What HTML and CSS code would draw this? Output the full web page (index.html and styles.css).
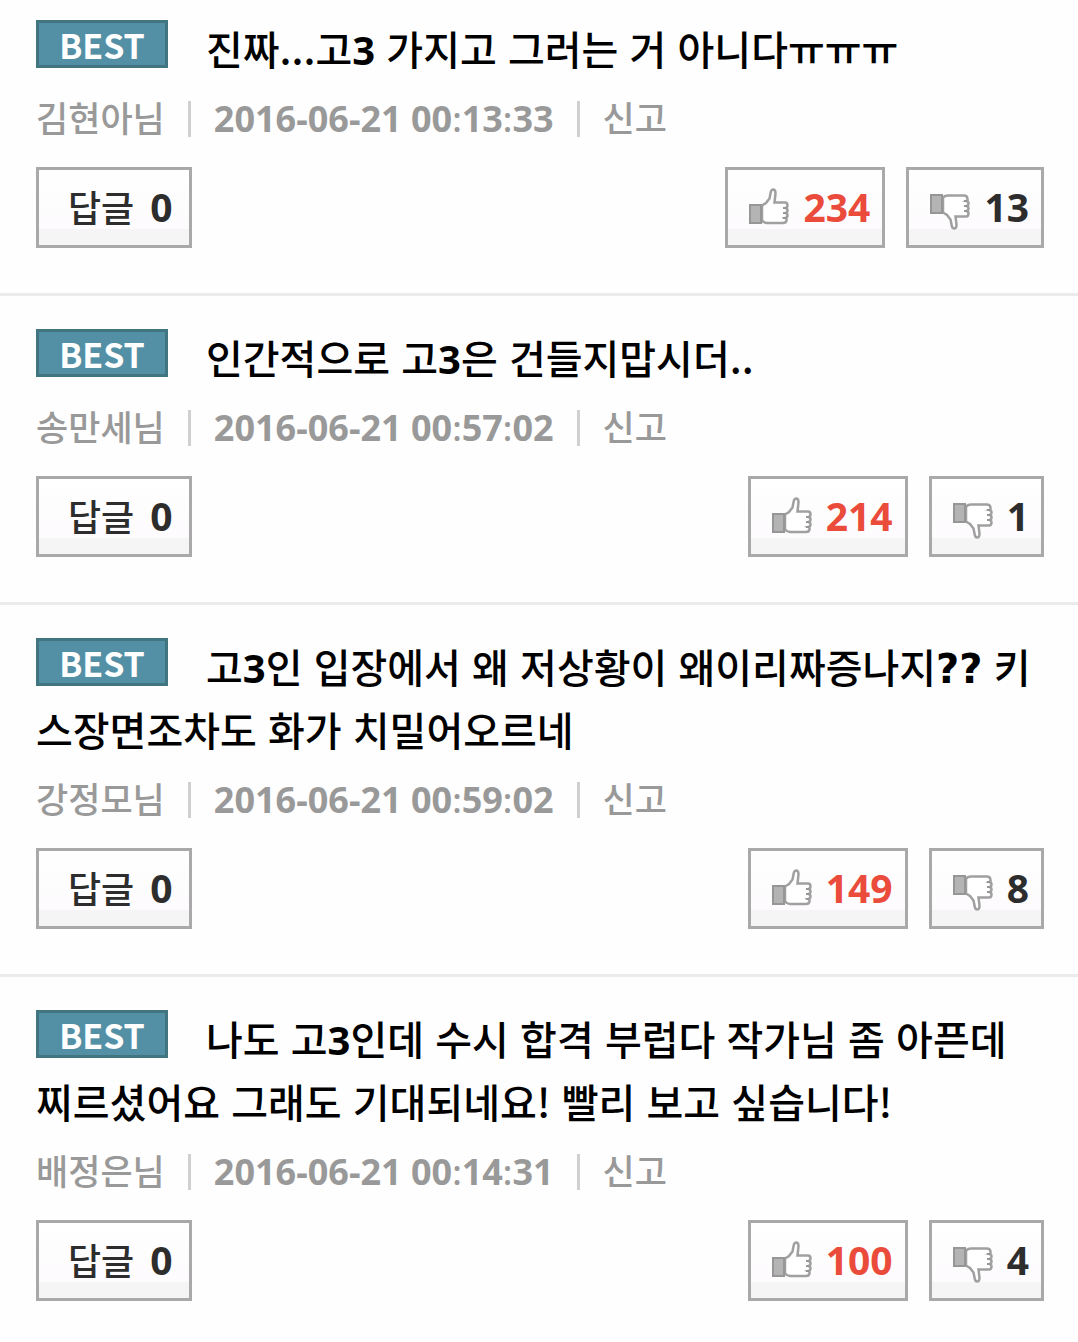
FILE: index.html
```html
<!DOCTYPE html>
<html lang="ko">
<head>
    <meta charset="UTF-8">
    <meta name="viewport" content="width=device-width, initial-scale=1.0">
    <title>베스트 댓글</title>
    <link rel="stylesheet" href="styles.css">
</head>
<body>

<!-- Shared icons -->
<svg class="sprite" aria-hidden="true">
    <symbol id="thumb-up" viewBox="0 0 40 44">
        <path d="M13 19.500L17 17L20.500 12.500L21.800 6Q22.300 3.500 24.500 3.500Q26.500 3.800 26.500 7.500L25.500 16.500H36Q38.500 16.500 38.500 19.500Q38.500 21.500 36.500 22Q38.500 22.500 38.500 24.500Q38.500 26.500 36.500 27Q38.500 27.500 38.500 29.500Q38.500 31.500 36.500 32Q38 32.500 37.500 34.500Q37 37 34 37H18Q15 37 13 34.500Z" fill="#fff" stroke="#a0a0a0" stroke-width="2.500"/>
        <path d="M34 22H37M34 27H37M34 32H37" stroke="#969696" stroke-width="2"/>
        <rect x="1" y="19" width="11" height="18" fill="#b4b4b4" stroke="#969696" stroke-width="2"/>
    </symbol>
    <symbol id="thumb-down" viewBox="0 0 40 44">
        <path d="M13 26.500L17 29L20.500 33.500L21.800 40Q22.300 42.500 24.500 42.500Q26.500 42.200 26.500 38.500L25.500 30.500H36Q38.500 30.500 38.500 27.500Q38.500 25.500 36.500 25Q38.500 24.500 38.500 22.500Q38.500 20.500 36.500 20Q38.500 19.500 38.500 17.500Q38.500 15.500 36.500 15Q38 14.500 37.500 12.500Q37 9.500 34 9.500H18Q15 9.500 13 11.500Z" fill="#fff" stroke="#a0a0a0" stroke-width="2.500"/>
        <path d="M34 25H37M34 20H37M34 15H37" stroke="#969696" stroke-width="2"/>
        <rect x="1" y="9" width="11" height="18" fill="#b4b4b4" stroke="#969696" stroke-width="2"/>
    </symbol>
</svg>

<ul class="comments">
    <li class="comment">
        <p class="text"><span class="best">BEST</span>진짜...고<b>3</b> 가지고 그러는 거 아니다ㅠㅠㅠ</p>
        <div class="meta">
            <span class="author">김현아님</span>
            <time class="date"><b>2016-06-21 00</b>:<b>13</b>:<b>33</b></time>
            <a href="#" class="report">신고</a>
        </div>
        <div class="actions">
            <button type="button" class="button reply">답글 <b>0</b></button>
            <button type="button" class="button like" aria-label="좋아요 234"><svg class="icon"><use href="#thumb-up"/></svg><b>234</b></button>
            <button type="button" class="button dislike" aria-label="싫어요 13"><svg class="icon"><use href="#thumb-down"/></svg><b>13</b></button>
        </div>
    </li>

    <li class="comment">
        <p class="text"><span class="best">BEST</span>인간적으로 고<b>3</b>은 건들지맙시더..</p>
        <div class="meta">
            <span class="author">송만세님</span>
            <time class="date"><b>2016-06-21 00</b>:<b>57</b>:<b>02</b></time>
            <a href="#" class="report">신고</a>
        </div>
        <div class="actions">
            <button type="button" class="button reply">답글 <b>0</b></button>
            <button type="button" class="button like" aria-label="좋아요 214"><svg class="icon"><use href="#thumb-up"/></svg><b>214</b></button>
            <button type="button" class="button dislike" aria-label="싫어요 1"><svg class="icon"><use href="#thumb-down"/></svg><b>1</b></button>
        </div>
    </li>

    <li class="comment">
        <p class="text"><span class="best">BEST</span>고<b>3</b>인 입장에서 왜 저상황이 왜이리짜증나지<b class="mark">??</b> 키스장면조차도 화가 치밀어오르네</p>
        <div class="meta">
            <span class="author">강정모님</span>
            <time class="date"><b>2016-06-21 00</b>:<b>59</b>:<b>02</b></time>
            <a href="#" class="report">신고</a>
        </div>
        <div class="actions">
            <button type="button" class="button reply">답글 <b>0</b></button>
            <button type="button" class="button like" aria-label="좋아요 149"><svg class="icon"><use href="#thumb-up"/></svg><b>149</b></button>
            <button type="button" class="button dislike" aria-label="싫어요 8"><svg class="icon"><use href="#thumb-down"/></svg><b>8</b></button>
        </div>
    </li>

    <li class="comment">
        <p class="text"><span class="best">BEST</span>나도 고<b>3</b>인데 수시 합격 부럽다 작가님 좀 아픈데 찌르셨어요 그래도 기대되네요! 빨리 보고 싶습니다!</p>
        <div class="meta">
            <span class="author">배정은님</span>
            <time class="date"><b>2016-06-21 00</b>:<b>14</b>:<b>31</b></time>
            <a href="#" class="report">신고</a>
        </div>
        <div class="actions">
            <button type="button" class="button reply">답글 <b>0</b></button>
            <button type="button" class="button like" aria-label="좋아요 100"><svg class="icon"><use href="#thumb-up"/></svg><b>100</b></button>
            <button type="button" class="button dislike" aria-label="싫어요 4"><svg class="icon"><use href="#thumb-down"/></svg><b>4</b></button>
        </div>
    </li>
</ul>

</body>
</html>
```
FILE: styles.css
```css
* {
    box-sizing: border-box;
}

body {
    margin: 0;
    background-color: #fefefe;
    color: #000;
    font-family: "Noto Sans CJK KR", sans-serif;
    font-weight: 500;
}

/* Numbers */
b {
    font-family: "Noto Sans", sans-serif;
    font-weight: 700;
}

.sprite {
    display: none;
}

/* Comment list */
.comments {
    list-style: none;
    margin: 0;
    padding: 0;
}

.comment {
    padding: 30px 34px 45px 36px;
    border-top: 3px solid #ebebeb;
}

.comment:first-child {
    border-top: none;
    padding-top: 17px;
}

.text {
    margin: 0;
    font-size: 40px;
    line-height: 63px;
}

.text b {
    font-size: 40px;
    line-height: 1;
}

.text .mark {
    font-family: "DejaVu Sans", sans-serif;
}

.best {
    display: inline-block;
    width: 132px;
    height: 48px;
    margin: 3px 38px 0 0;
    border: 3px solid #41757f;
    background-color: #5490a5;
    color: #fff;
    font-size: 34px;
    font-weight: 700;
    line-height: 44px;
    text-align: center;
    vertical-align: top;
}

/* Author, date and report link */
.meta {
    display: flex;
    align-items: center;
    height: 36px;
    margin: 21px 0 30px;
    color: #999;
    font-size: 35px;
    line-height: 32px;
}

.meta > * {
    height: 36px;
}

.meta b {
    font-size: 36px;
    line-height: 1;
}

.date {
    font-family: "Noto Sans", sans-serif;
}

.date,
.report {
    margin-left: 23px;
    padding-left: 23px;
    border-left: 3px solid #d0d0d0;
}

.report {
    color: #999;
    text-decoration: none;
}

/* Buttons */
.actions {
    display: flex;
    gap: 21px;
}

.button {
    display: flex;
    align-items: center;
    height: 81px;
    padding: 0 12px 0 21px;
    border: 3px solid #a9a9a9;
    background: linear-gradient(#fff, #fdfbfd 59px, #f5f5f5 59px);
    color: #2d2d2d;
    font-family: inherit;
    font-size: 36px;
    font-weight: 500;
    cursor: pointer;
}

.button b {
    padding-bottom: 3px;
    font-size: 39px;
}

.reply {
    gap: 16px;
    margin-right: auto;
    padding: 0 16px 3px 29px;
}

.reply b {
    padding-bottom: 0;
}

.like,
.dislike {
    gap: 14px;
}

.like {
    color: #ea4b3b;
}

.icon {
    width: 40px;
    height: 44px;
}
```
